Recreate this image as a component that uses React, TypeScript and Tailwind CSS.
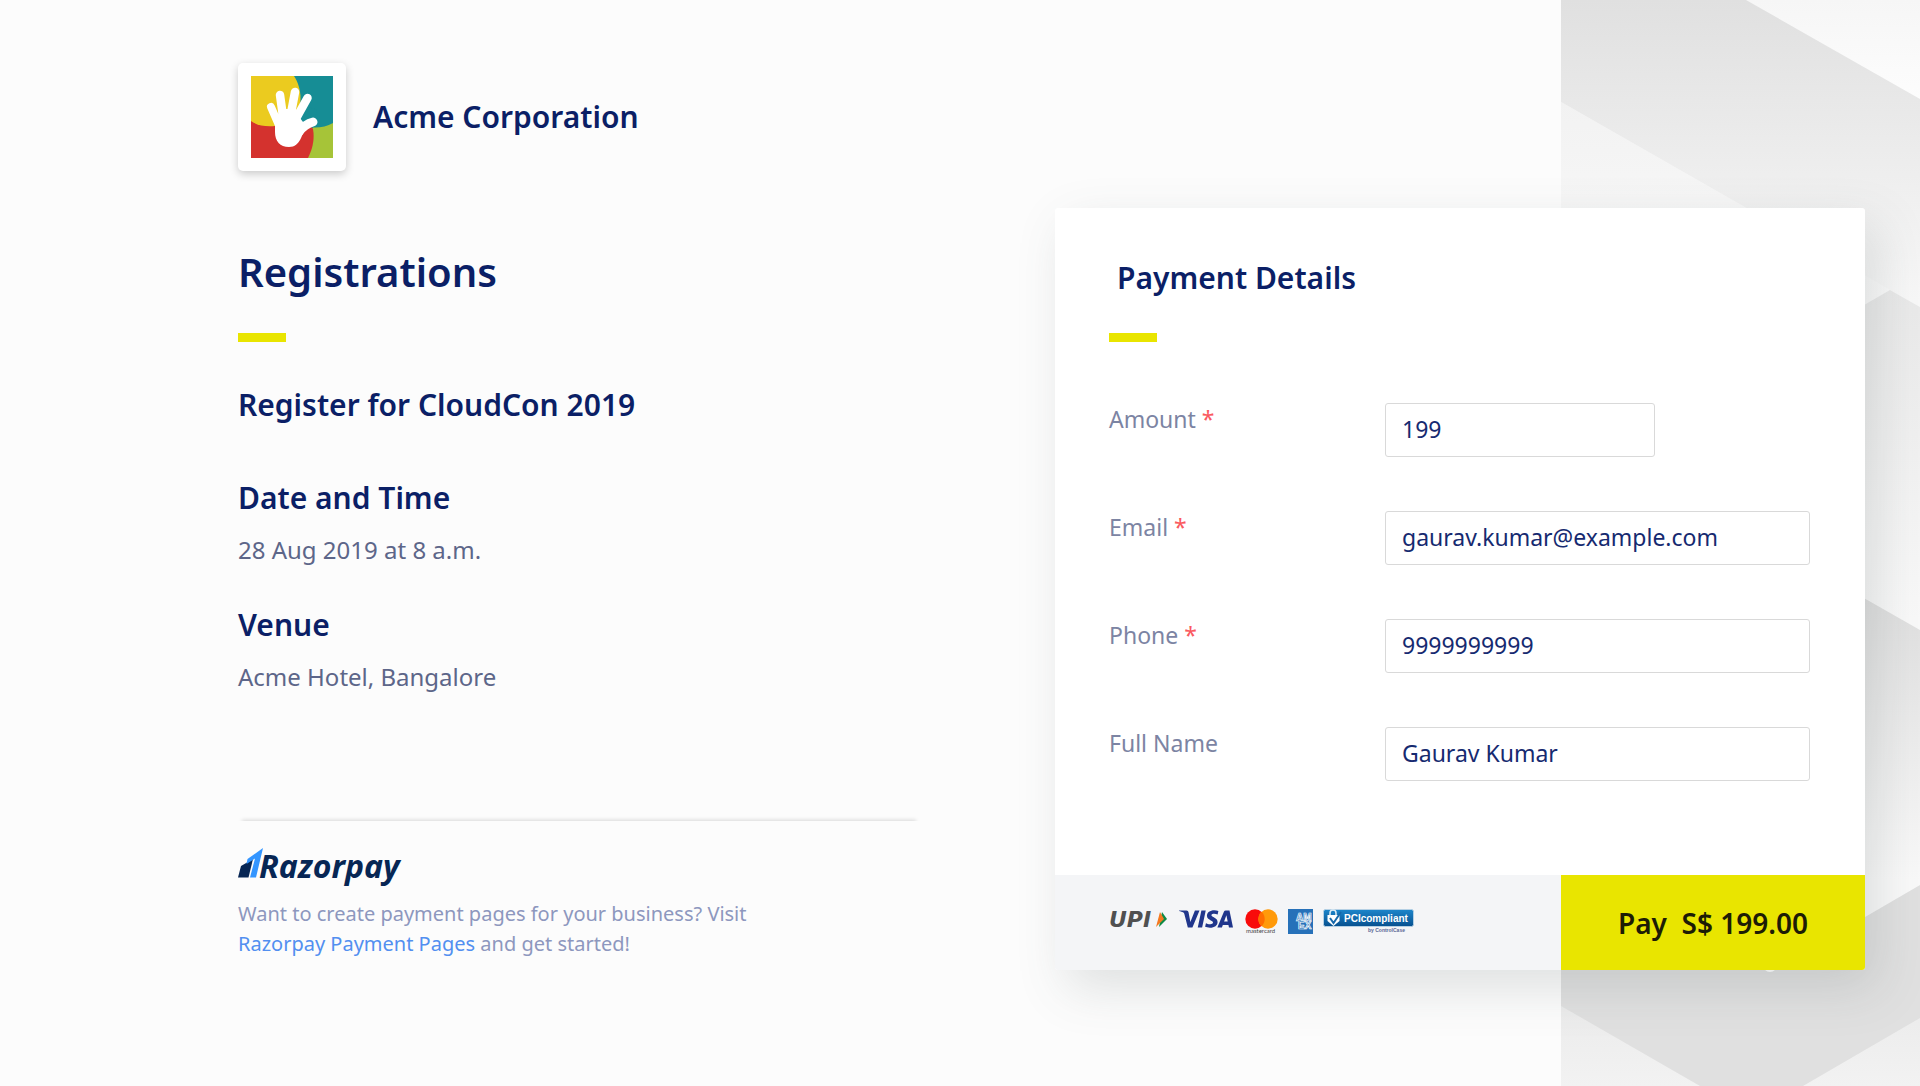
import { ReactNode, useState } from 'react';
import { SiVisa } from 'react-icons/si';

type Field = {
  id: string;
  label: string;
  type: string;
  required: boolean;
  short?: boolean;
};

const FIELDS: Field[] = [
  { id: 'amount', label: 'Amount', type: 'text', required: true, short: true },
  { id: 'email', label: 'Email', type: 'email', required: true },
  { id: 'phone', label: 'Phone', type: 'tel', required: true },
  { id: 'name', label: 'Full Name', type: 'text', required: false },
];

const HandLogo = () => (
  <svg viewBox="0 0 82 82" className="h-[82px] w-[82px]" aria-hidden="true">
    <rect width="82" height="82" fill="#168d95" />
    <path d="M62 51.5 Q73 52 82 47 V82 H50 V52 Z" fill="#a6c438" />
    <path d="M0 40 H55 L62 53 C64 64 61 74 57 82 H0 Z" fill="#d4322e" />
    <path d="M0 0 H43 C51 12 52 30 44 44 L24 50 C14 51 5 49 0 45 Z" fill="#ebcb1f" />
    <path d="M50 28 L66 34 L62 52 L48 46 Z" fill="#168d95" />
    <g stroke="#fff" strokeLinecap="round" fill="none">
      <path d="M20 31 L30 54" strokeWidth="8" />
      <path d="M29 19 L33 48" strokeWidth="8.500" />
      <path d="M44 16 L38 48" strokeWidth="8.500" />
      <path d="M56.500 22 L42 48" strokeWidth="8.500" />
      <path d="M62 46 Q54 48 48 56" strokeWidth="9" />
    </g>
    <path d="M24 44 L30 33 H45 L49 42 L55 50 C51 57 50 71 38 71 C29 71 24 65 24 56 Z" fill="#fff" />
  </svg>
);

const RazorpayMark = () => (
  <svg viewBox="0 0 25 30" className="h-[30px] w-[25px]" aria-hidden="true">
    <path d="M3 18 L15 11 L10.500 29.500 H0 Z" fill="#072654" />
    <path d="M9.500 11 L25 0 L18 29.500 H12 L17 10.500 L8.500 16 Z" fill="#3395ff" />
  </svg>
);

// Grey hexagons on the right edge of the page
const Backdrop = () => (
  <svg
    viewBox="0 0 359 1086"
    preserveAspectRatio="xMaxYMin slice"
    className="absolute inset-y-0 right-0 h-full w-[359px]"
    aria-hidden="true"
  >
    <defs>
      <linearGradient id="corner" x1="0" y1="0" x2="0" y2="1">
        <stop offset="0" stopColor="#f6f6f6" />
        <stop offset="1" stopColor="#fdfdfd" />
      </linearGradient>
      <linearGradient id="band" gradientUnits="userSpaceOnUse" x1="0" y1="0" x2="0" y2="300">
        <stop offset="0" stopColor="#e0e0e0" />
        <stop offset="1" stopColor="#f8f8f8" />
      </linearGradient>
      <linearGradient id="low" gradientUnits="userSpaceOnUse" x1="0" y1="100" x2="0" y2="300">
        <stop offset="0" stopColor="#f2f2f2" />
        <stop offset="1" stopColor="#fafafa" />
      </linearGradient>
      <linearGradient id="hexTop" gradientUnits="userSpaceOnUse" x1="0" y1="290" x2="0" y2="620">
        <stop offset="0" stopColor="#e9e9e9" />
        <stop offset="1" stopColor="#f9f9f9" />
      </linearGradient>
      <linearGradient id="hexMid" gradientUnits="userSpaceOnUse" x1="0" y1="600" x2="0" y2="880">
        <stop offset="0" stopColor="#dfdfdf" />
        <stop offset="1" stopColor="#f9f9f9" />
      </linearGradient>
      <linearGradient id="foot" gradientUnits="userSpaceOnUse" x1="0" y1="1000" x2="0" y2="1086">
        <stop offset="0" stopColor="#ebebeb" />
        <stop offset="1" stopColor="#f2f2f2" />
      </linearGradient>
    </defs>
    <rect width="359" height="100" fill="url(#corner)" />
    <path d="M0 102 L329 290 L0 480 Z" fill="url(#low)" />
    <path d="M0 0 H185 L359 99 V307 L329 290 L0 102 Z" fill="url(#band)" />
    <path d="M0 480 L329 290 L359 307 V630 L0 425 Z" fill="url(#hexTop)" />
    <path d="M0 425 L359 630 V885 L0 1092 Z" fill="url(#hexMid)" />
    <path d="M0 1006 V1086 H359 V1018 Z" fill="url(#foot)" />
    <path d="M359 885 V1018 L242 1086 H139 L0 1006 V900 L304 917 Z" fill="#e0e0e0" />
    <circle cx="209" cy="965" r="7" fill="#fff" />
  </svg>
);

const UpiLogo = () => (
  <svg viewBox="0 0 58 30" className="-mt-1 h-[30px] w-[58px]" role="img" aria-label="UPI">
    <text x="0" y="22" fontFamily="DejaVu Sans" fontSize="22" fontStyle="italic" fontWeight="700" fill="#505050">UPI</text>
    <path d="M53 7 L58 14 L50 22 Z" fill="#0d8a46" />
    <path d="M51 7 L55 14 L47 22 Z" fill="#f47920" />
  </svg>
);

const MastercardLogo = () => (
  <svg viewBox="0 0 33 25" className="h-[25px] w-[33px]" role="img" aria-label="mastercard">
    <circle cx="10" cy="10" r="9.700" fill="#f80b0b" />
    <circle cx="23" cy="10" r="9.700" fill="#ff9a0a" />
    <path d="M16.500 2.800 A9.700 9.700 0 0 1 16.500 17.200 A9.700 9.700 0 0 1 16.500 2.800 Z" fill="#ff6d00" />
    <text x="1" y="24" fontFamily="Lato" fontSize="6" fill="#444">mastercard</text>
  </svg>
);

const AmexLogo = () => (
  <svg viewBox="0 0 25 25" className="h-[25px] w-[25px]" role="img" aria-label="American Express">
    <rect width="25" height="25" fill="#2671b9" />
    <g fontFamily="Liberation Sans" fontSize="10" fontWeight="700" fill="#2671b9" stroke="#fff" strokeWidth="0.700">
      <text x="8" y="12">AM</text>
      <text x="10" y="20">EX</text>
    </g>
  </svg>
);

const PciBadge = () => (
  <svg viewBox="0 0 92 25" className="h-[25px] w-[92px]" role="img" aria-label="PCI compliant">
    <defs>
      <linearGradient id="pci" x1="0" y1="0" x2="0" y2="1">
        <stop offset="0" stopColor="#1d86cb" />
        <stop offset="1" stopColor="#07508f" />
      </linearGradient>
    </defs>
    <rect x="0.500" y="0.500" width="90" height="17" rx="2" fill="url(#pci)" stroke="#b5d0e4" />
    <path d="M7 6 V4 A3 3 0 0 1 13 4 V6" fill="none" stroke="#dcebf5" strokeWidth="1.500" />
    <path d="M4.500 6 H16.500 V12 L10.500 17 L4.500 12 Z" fill="#fff" />
    <path d="M7 9 L10.500 14 L18 3" fill="none" stroke="#1668ab" strokeWidth="2" />
    <text x="21" y="13" fontFamily="Liberation Sans" fontSize="10" fontWeight="700" fill="#fff">PCIcompliant</text>
    <text x="45" y="23" fontFamily="Liberation Sans" fontSize="5" fontWeight="700" fill="#5b6896">by ControlCase</text>
  </svg>
);

const Accent = () => <div className="h-[9px] w-12 bg-[#e9e500]" />;

const SubHeading = ({ children }: { children: ReactNode }) => (
  <h2 className="text-[30px] leading-10 font-semibold text-[#0b1f66]">{children}</h2>
);

export default function App() {
  const [values, setValues] = useState<Record<string, string>>({
    amount: '199',
    email: 'gaurav.kumar@example.com',
    phone: '9999999999',
    name: 'Gaurav Kumar',
  });

  return (
    <div className="relative min-h-screen bg-[#fcfcfc] font-['Noto_Sans',sans-serif]">
      <Backdrop />

      <div className="relative flex items-start pr-[55px] pb-[111px] pl-[238px]">
        {/* ===== EVENT ===== */}
        <main className="w-[682px] shrink-0 pt-[63px]">
          <header className="flex items-center gap-[27px]">
            <div className="rounded-[5px] bg-white p-[13px] shadow-[0_3px_8px_rgba(0,0,0,0.2)]">
              <HandLogo />
            </div>
            <SubHeading>Acme Corporation</SubHeading>
          </header>

          <h1 className="mt-[77px] mb-[37px] text-[40px] leading-[48px] font-semibold text-[#0b1f66]">Registrations</h1>
          <Accent />

          <div className="mt-[43px]">
            <SubHeading>Register for CloudCon 2019</SubHeading>
          </div>
          <section className="mt-[53px]">
            <SubHeading>Date and Time</SubHeading>
            <p className="mt-4 text-2xl leading-8 text-[#5d6689]">28 Aug 2019 at 8 a.m.</p>
          </section>
          <section className="mt-[39px]">
            <SubHeading>Venue</SubHeading>
            <p className="mt-4 text-2xl leading-8 text-[#5d6689]">Acme Hotel, Bangalore</p>
          </section>

          <footer className="mt-[128px] pt-[27px] pb-4 shadow-[0_-5px_4px_-4px_rgba(0,0,0,0.15)]">
            <div className="flex h-9 items-start">
              <RazorpayMark />
              <span className="-ml-1 text-[32px] leading-9 font-bold text-[#072654] italic">Razorpay</span>
            </div>
            <p className="mt-[15px] max-w-[540px] text-xl leading-[30px] text-[#8d97be]">
              Want to create payment pages for your business? Visit{' '}
              <a href="#payment-pages" className="text-[#528ff0]">Razorpay Payment Pages</a> and get started!
            </p>
          </footer>
        </main>

        {/* ===== PAYMENT FORM ===== */}
        <form
          className="mt-52 ml-[135px] min-w-0 flex-1 overflow-hidden rounded-[3px] bg-white shadow-[12px_18px_50px_rgba(75,90,86,0.17)]"
          onSubmit={(e) => e.preventDefault()}
        >
          <div className="pt-[50px] pr-[55px] pb-[94px] pl-[54px]">
            <div className="mb-[35px] pl-2">
              <SubHeading>Payment Details</SubHeading>
            </div>
            <Accent />

            <div className="mt-[61px] flex flex-col gap-[54px]">
              {FIELDS.map((f) => (
                <div key={f.id} className="flex items-start">
                  <label htmlFor={f.id} className="w-[276px] shrink-0 text-[23px] leading-8 text-[#7c84a3]">
                    {f.label} {f.required && <span className="text-[#fa5a5f]">*</span>}
                  </label>
                  <input
                    id={f.id}
                    type={f.type}
                    value={values[f.id]}
                    onChange={(e) => setValues({ ...values, [f.id]: e.target.value })}
                    className={`h-[54px] min-w-0 rounded-[3px] border border-[#d9d9d9] bg-white px-4 pb-0.5 text-[23px] text-[#162a70] outline-none ${
                      f.short ? 'w-[270px]' : 'flex-1'
                    }`}
                  />
                </div>
              ))}
            </div>
          </div>

          <div className="flex h-[95px] items-stretch bg-[#f4f5f7]">
            <div className="flex flex-1 items-start gap-[10px] pt-[34px] pl-[54px]">
              <UpiLogo />
              <span className="flex h-5 items-center overflow-hidden px-0.5">
                <SiVisa size={54} color="#20368c" title="VISA" />
              </span>
              <MastercardLogo />
              <AmexLogo />
              <PciBadge />
            </div>
            <button type="submit" className="w-[304px] bg-[#e9e500] text-[28px] font-semibold whitespace-pre text-[#1d1c05]">
              {'Pay  S$ 199.00'}
            </button>
          </div>
        </form>
      </div>
    </div>
  );
}
